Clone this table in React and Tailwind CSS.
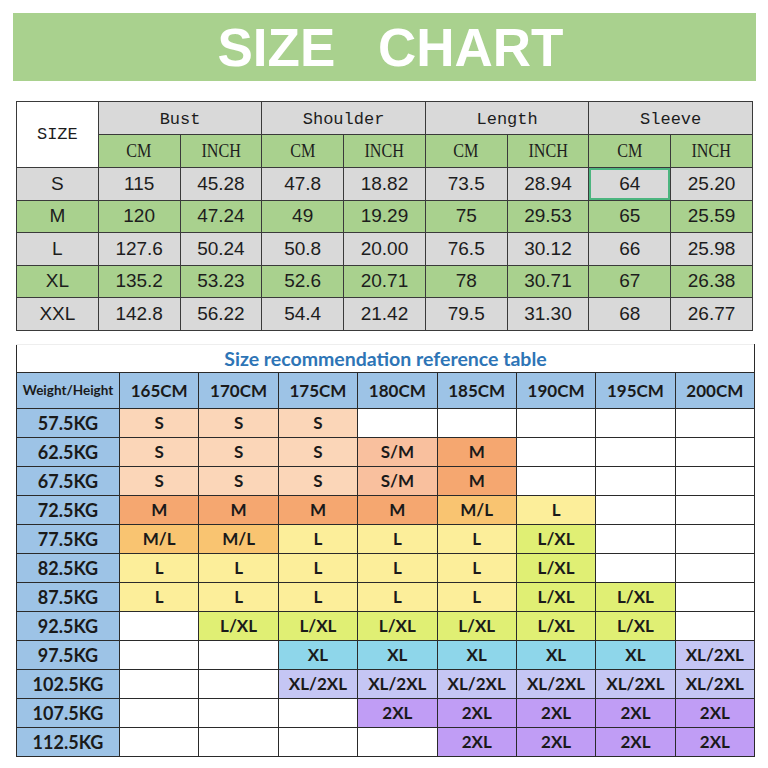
import React from 'react';

const measures = ['Bust', 'Shoulder', 'Length', 'Sleeve'];

const sizeRows = [
  { size: 'S', values: ['115', '45.28', '47.8', '18.82', '73.5', '28.94', '64', '25.20'], green: false },
  { size: 'M', values: ['120', '47.24', '49', '19.29', '75', '29.53', '65', '25.59'], green: true },
  { size: 'L', values: ['127.6', '50.24', '50.8', '20.00', '76.5', '30.12', '66', '25.98'], green: false },
  { size: 'XL', values: ['135.2', '53.23', '52.6', '20.71', '78', '30.71', '67', '26.38'], green: true },
  { size: 'XXL', values: ['142.8', '56.22', '54.4', '21.42', '79.5', '31.30', '68', '26.77'], green: false }
];

const heights = ['165CM', '170CM', '175CM', '180CM', '185CM', '190CM', '195CM', '200CM'];

const recRows = [
  ['57.5KG', ['S', 'S', 'S', '', '', '', '', '']],
  ['62.5KG', ['S', 'S', 'S', 'S/M', 'M', '', '', '']],
  ['67.5KG', ['S', 'S', 'S', 'S/M', 'M', '', '', '']],
  ['72.5KG', ['M', 'M', 'M', 'M', 'M/L', 'L', '', '']],
  ['77.5KG', ['M/L', 'M/L', 'L', 'L', 'L', 'L/XL', '', '']],
  ['82.5KG', ['L', 'L', 'L', 'L', 'L', 'L/XL', '', '']],
  ['87.5KG', ['L', 'L', 'L', 'L', 'L', 'L/XL', 'L/XL', '']],
  ['92.5KG', ['', 'L/XL', 'L/XL', 'L/XL', 'L/XL', 'L/XL', 'L/XL', '']],
  ['97.5KG', ['', '', 'XL', 'XL', 'XL', 'XL', 'XL', 'XL/2XL']],
  ['102.5KG', ['', '', 'XL/2XL', 'XL/2XL', 'XL/2XL', 'XL/2XL', 'XL/2XL', 'XL/2XL']],
  ['107.5KG', ['', '', '', '2XL', '2XL', '2XL', '2XL', '2XL']],
  ['112.5KG', ['', '', '', '', '2XL', '2XL', '2XL', '2XL']]
];

const cellColor = {
  '': 'bg-white',
  S: 'bg-[#fbd6b8]',
  'S/M': 'bg-[#f9c09e]',
  M: 'bg-[#f5a770]',
  'M/L': 'bg-[#f9c471]',
  L: 'bg-[#fcee9a]',
  'L/XL': 'bg-[#e0ef74]',
  XL: 'bg-[#8ed6ea]',
  'XL/2XL': 'bg-[#c5c6f4]',
  '2XL': 'bg-[#c09df5]'
};

const narrow = "font-['Liberation_Sans_Narrow','Liberation_Sans',sans-serif]";

export default function App() {
  return (
    <div className="w-[768px] h-[768px] bg-white pt-[13px] overflow-hidden">
      {/* Title band */}
      <div className="ml-[13px] w-[743px] h-[68px] bg-[#a9d18e] flex items-center justify-center pl-[12px]">
        <h1 className="text-white text-[53px] font-bold leading-none font-['Liberation_Sans',Arial,sans-serif]">
          SIZE <span className="ml-[28px]">CHART</span>
        </h1>
      </div>

      {/* Measurement table */}
      <table className="mt-[20px] ml-[16px] w-[737px] table-fixed border-collapse text-[#1d1d1d]">
        <tbody>
          <tr className="h-[33px]">
            <td rowSpan={2} className="border-[1.5px] border-[#3a3a3a] bg-white text-center text-[17px] font-['Liberation_Mono',monospace]">
              SIZE
            </td>
            {measures.map((m) => (
              <td key={m} colSpan={2} className="border-[1.5px] border-[#3a3a3a] bg-[#d9d9d9] text-center text-[17px] pt-[3px] font-['Liberation_Mono',monospace]">
                {m}
              </td>
            ))}
          </tr>
          <tr className="h-[33px]">
            {measures.map((m) => (
              <React.Fragment key={m}>
                <td className="border-[1.5px] border-[#3a3a3a] bg-[#a9d18e] text-center text-[19px] font-['Liberation_Serif',serif]">
                  <span className="inline-block scale-x-85">CM</span>
                </td>
                <td className="border-[1.5px] border-[#3a3a3a] bg-[#a9d18e] text-center text-[19px] font-['Liberation_Serif',serif]">
                  <span className="inline-block scale-x-85">INCH</span>
                </td>
              </React.Fragment>
            ))}
          </tr>
          {sizeRows.map((row) => (
            <tr key={row.size} className={`h-[32.6px] ${row.green ? 'bg-[#a9d18e]' : 'bg-[#d9d9d9]'}`}>
              <td className={`border-[1.5px] border-[#3a3a3a] text-center text-[19px] ${narrow}`}>{row.size}</td>
              {row.values.map((v, i) => (
                <td
                  key={i}
                  className={`border-[1.5px] border-[#3a3a3a] text-center text-[19px] ${narrow} ${
                    row.size === 'S' && i === 6 ? 'shadow-[inset_0_0_0_2px_#4cb57f]' : ''
                  }`}
                >
                  {v}
                </td>
              ))}
            </tr>
          ))}
        </tbody>
      </table>

      {/* Recommendation table */}
      <table className="mt-[13px] ml-[16px] w-[739px] table-fixed border-collapse text-[#1a1a1a] leading-none font-['Lato',sans-serif]">
        <colgroup>
          <col className="w-[103px]" />
          {heights.map((h) => (
            <col key={h} />
          ))}
        </colgroup>
        <tbody>
          <tr className="h-[28px]">
            <td colSpan={9} className="border-x-[1.5px] border-t border-x-[#2a2a2a] border-t-[#eeeeee] bg-white text-center text-[19.5px] font-bold text-[#2e75b6]">
              Size recommendation reference table
            </td>
          </tr>
          <tr className="h-[36px] bg-[#9dc3e6]">
            <td className="border-[1.5px] border-[#2a2a2a] text-center text-[13.5px] font-bold">Weight/Height</td>
            {heights.map((h) => (
              <td key={h} className="border-[1.5px] border-[#2a2a2a] text-center text-[17px] font-bold">
                {h}
              </td>
            ))}
          </tr>
          {recRows.map(([w, cells]) => (
            <tr key={w} className="h-[29px]">
              <td className="border-[1.5px] border-[#2a2a2a] bg-[#9dc3e6] text-center text-[18px] font-bold">{w}</td>
              {cells.map((c, i) => (
                <td key={i} className={`border-[1.5px] border-[#2a2a2a] text-center text-[17px] font-bold ${cellColor[c]}`}>
                  {c}
                </td>
              ))}
            </tr>
          ))}
        </tbody>
      </table>
    </div>
  );
}
